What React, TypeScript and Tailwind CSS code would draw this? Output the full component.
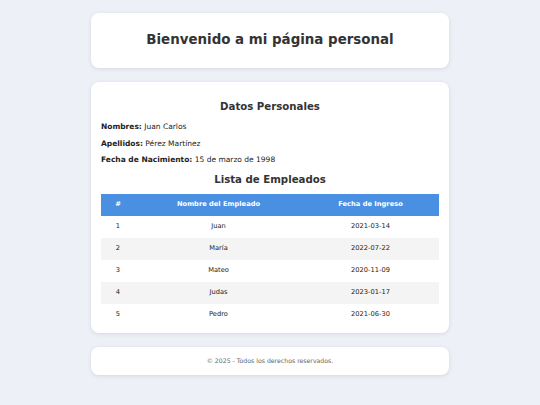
import React from 'react';

const empleados = [
  { id: 1, nombre: 'Juan', fecha: '2021-03-14' },
  { id: 2, nombre: 'María', fecha: '2022-07-22' },
  { id: 3, nombre: 'Mateo', fecha: '2020-11-09' },
  { id: 4, nombre: 'Judas', fecha: '2023-01-17' },
  { id: 5, nombre: 'Pedro', fecha: '2021-06-30' },
];

const App: React.FC = () => {
  return (
    <div className="min-h-screen bg-[#edf0f7] pt-[13px] pb-4 text-[#333] font-['DejaVu_Sans',Verdana,sans-serif]">
      <div className="mx-auto w-[358px] flex flex-col gap-[14px]">
        <header className="bg-white rounded-lg shadow-[0_1px_4px_rgba(0,0,0,0.1)] h-[55px] flex items-center justify-center">
          <h1 className="text-[13.4px] font-bold text-[#333]">Bienvenido a mi página personal</h1>
        </header>

        <main className="bg-white rounded-lg shadow-[0_1px_4px_rgba(0,0,0,0.1)] px-[10px] pt-[18px] pb-[7px]">
          <h2 className="text-center text-[10.2px] font-bold leading-[14px]">Datos Personales</h2>
          <div className="mt-[8px] flex flex-col gap-[6px] text-[7.5px] leading-[10.5px] text-[#222]">
            <p><span className="font-bold">Nombres:</span> Juan Carlos</p>
            <p><span className="font-bold">Apellidos:</span> Pérez Martínez</p>
            <p><span className="font-bold">Fecha de Nacimiento:</span> 15 de marzo de 1998</p>
          </div>
          <h2 className="mt-[7px] text-center text-[10.2px] font-bold leading-[14px]">Lista de Empleados</h2>
          <table className="mt-[7px] w-full border-collapse text-[6.7px] text-[#222]">
            <thead>
              <tr className="bg-[#4a90e2] text-white h-[22px]">
                <th className="w-[34px] font-bold">#</th>
                <th className="w-[167px] font-bold">Nombre del Empleado</th>
                <th className="font-bold">Fecha de Ingreso</th>
              </tr>
            </thead>
            <tbody>
              {empleados.map((e, i) => (
                <tr key={e.id} className={`h-[22px] ${i % 2 === 1 ? 'bg-[#f4f4f4]' : 'bg-white'}`}>
                  <td className="text-center">{e.id}</td>
                  <td className="text-center">{e.nombre}</td>
                  <td className="text-center">{e.fecha}</td>
                </tr>
              ))}
            </tbody>
          </table>
        </main>

        <footer className="bg-white rounded-lg shadow-[0_1px_4px_rgba(0,0,0,0.1)] h-[28px] flex items-center justify-center">
          <p className="text-[6.2px] text-[#666]">© 2025 - Todos los derechos reservados.</p>
        </footer>
      </div>
    </div>
  );
};

export default App;
